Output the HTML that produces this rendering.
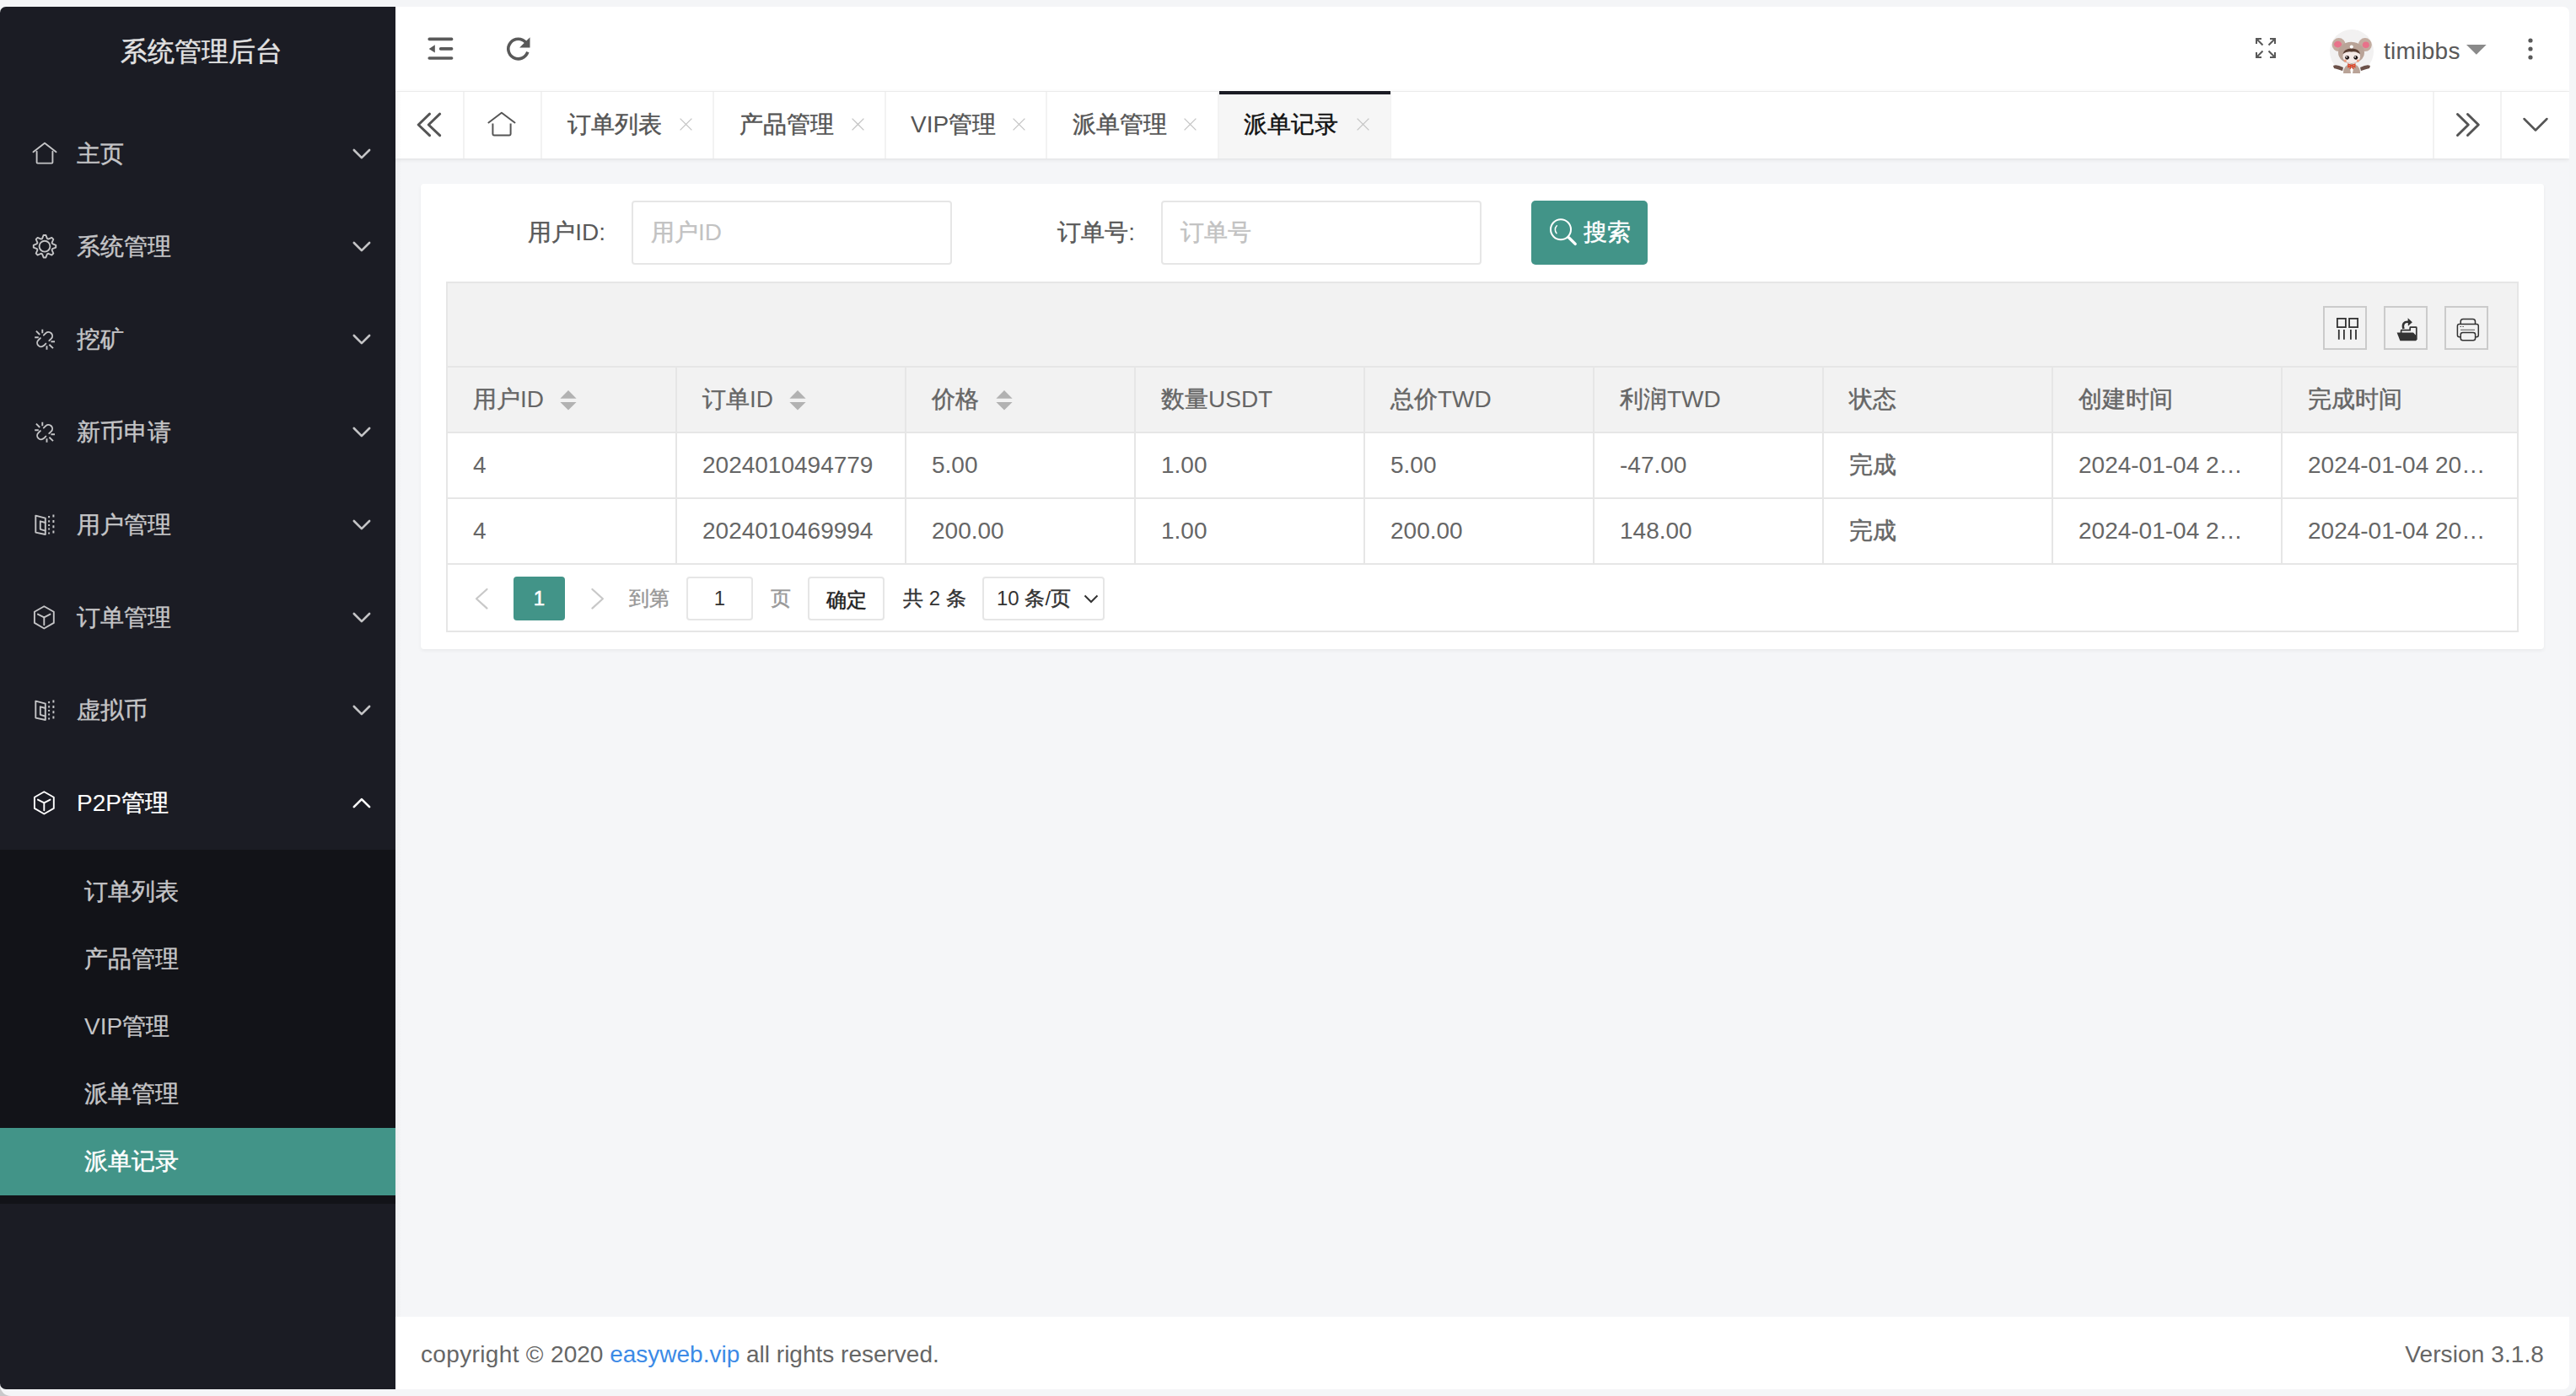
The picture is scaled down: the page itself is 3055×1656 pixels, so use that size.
<!DOCTYPE html><html><head><meta charset="utf-8"><title>派单记录</title><style>
*{margin:0;padding:0;box-sizing:border-box}
html,body{width:3055px;height:1656px;overflow:hidden;background:#c9c9cb;font-family:"Liberation Sans",sans-serif}
div,span{position:absolute;white-space:nowrap}
span.i{position:static}
span.c{position:static;-webkit-text-stroke:0.45px currentColor}
svg{position:absolute;overflow:visible}
#win{left:0;top:0;width:3047px;height:1648px;clip-path:inset(8px 0 0 0 round 7px);background:#f5f6f8}
.mt{font-size:28px;color:#c4c4c6;line-height:110px;height:110px}
.st{font-size:28px;color:#c4c4c6;line-height:80px;height:80px}
.tt{font-size:28px;color:#595959;line-height:80px;height:80px;top:108px}
.th{font-size:28px;color:#666;line-height:76px;height:76px;top:436px}
.td{font-size:28px;color:#666;line-height:76px;height:76px}
.vl{background:#e6e6e6;width:2px}
.hl{background:#e6e6e6;height:2px}
.pg{font-size:24px;line-height:52px;height:52px;top:684px}
</style></head><body>
<div style="left:0;top:0;width:3055px;height:1656px;background:#f4f5f7;border-radius:0 0 13px 13px"></div>
<div id="win">
<div style="left:0;top:0;width:469px;height:1648px;background:#1b1c24"></div>
<div style="left:4px;top:39px;width:469px;text-align:center;font-size:32px;line-height:44px;color:#e2e2e2"><span class="c">系统管理后台</span></div>
<div class="mt" style="left:91px;top:127.6px;color:#c4c4c6"><span class="c">主页</span></div>
<svg style="left:0;top:0" width="1" height="1"><path d="M419.8 178.0 L428.9 187.1 L438.1 178.0" fill="none" stroke="#c4c4c6" stroke-width="2.6" stroke-linecap="round" stroke-linejoin="round"/></svg>
<svg style="left:39px;top:168.6px" width="28" height="28" viewBox="0 0 28 28"><path d="M0.5 11.3 L14 0.8 L27.5 11.3" fill="none" stroke="#c4c4c6" stroke-width="1.9" stroke-linecap="round" stroke-linejoin="round"/><path d="M4.6 10.8 V23.6 Q4.6 24.6 5.6 24.6 H22.4 Q23.4 24.6 23.4 23.6 V10.8" fill="none" stroke="#c4c4c6" stroke-width="1.9" stroke-linecap="round" stroke-linejoin="round"/></svg>
<div class="mt" style="left:91px;top:237.6px;color:#c4c4c6"><span class="c">系统管理</span></div>
<svg style="left:0;top:0" width="1" height="1"><path d="M419.8 288.0 L428.9 297.1 L438.1 288.0" fill="none" stroke="#c4c4c6" stroke-width="2.6" stroke-linecap="round" stroke-linejoin="round"/></svg>
<svg style="left:39px;top:278.6px" width="28" height="28" viewBox="0 0 28 28"><path d="M12.64 -0.03 L15.36 -0.03 L16.97 4.07 L18.36 4.65 L22.40 2.89 L24.31 4.80 L22.55 8.84 L23.13 10.23 L27.23 11.84 L27.23 14.56 L23.13 16.17 L22.55 17.56 L24.31 21.60 L22.40 23.51 L18.36 21.75 L16.97 22.33 L15.36 26.43 L12.64 26.43 L11.03 22.33 L9.64 21.75 L5.60 23.51 L3.69 21.60 L5.45 17.56 L4.87 16.17 L0.77 14.56 L0.77 11.84 L4.87 10.23 L5.45 8.84 L3.69 4.80 L5.60 2.89 L9.64 4.65 L11.03 4.07Z" fill="none" stroke="#c4c4c6" stroke-width="1.9" stroke-linecap="round" stroke-linejoin="round"/><circle cx="14" cy="13.2" r="6.4" fill="none" stroke="#c4c4c6" stroke-width="1.9" stroke-linecap="round" stroke-linejoin="round"/></svg>
<div class="mt" style="left:91px;top:347.6px;color:#c4c4c6"><span class="c">挖矿</span></div>
<svg style="left:0;top:0" width="1" height="1"><path d="M419.8 398.0 L428.9 407.1 L438.1 398.0" fill="none" stroke="#c4c4c6" stroke-width="2.6" stroke-linecap="round" stroke-linejoin="round"/></svg>
<svg style="left:39px;top:389.20000000000005px" width="28" height="28" viewBox="0 0 28 28"><path d="M12.8 8.6 L15.35 6.15 A4.6 4.6 0 0 1 21.85 12.65 L19.3 15.2" fill="none" stroke="#c4c4c6" stroke-width="1.9" stroke-linecap="round" stroke-linejoin="round"/><path d="M8.85 12.05 L6.35 14.55 A4.6 4.6 0 0 0 12.85 21.05 L15.35 18.55" fill="none" stroke="#c4c4c6" stroke-width="1.9" stroke-linecap="round" stroke-linejoin="round"/><path d="M3.9 3.7 L8.2 8 M11.3 1.7 V6.3 M2.2 11.2 H6.8 M21.4 16.3 H26 M16.5 21.2 V25.8 M19.4 19.8 L24 24.1" fill="none" stroke="#c4c4c6" stroke-width="1.9"/></svg>
<div class="mt" style="left:91px;top:457.6px;color:#c4c4c6"><span class="c">新币申请</span></div>
<svg style="left:0;top:0" width="1" height="1"><path d="M419.8 508.0 L428.9 517.1 L438.1 508.0" fill="none" stroke="#c4c4c6" stroke-width="2.6" stroke-linecap="round" stroke-linejoin="round"/></svg>
<svg style="left:39px;top:499.20000000000005px" width="28" height="28" viewBox="0 0 28 28"><path d="M12.8 8.6 L15.35 6.15 A4.6 4.6 0 0 1 21.85 12.65 L19.3 15.2" fill="none" stroke="#c4c4c6" stroke-width="1.9" stroke-linecap="round" stroke-linejoin="round"/><path d="M8.85 12.05 L6.35 14.55 A4.6 4.6 0 0 0 12.85 21.05 L15.35 18.55" fill="none" stroke="#c4c4c6" stroke-width="1.9" stroke-linecap="round" stroke-linejoin="round"/><path d="M3.9 3.7 L8.2 8 M11.3 1.7 V6.3 M2.2 11.2 H6.8 M21.4 16.3 H26 M16.5 21.2 V25.8 M19.4 19.8 L24 24.1" fill="none" stroke="#c4c4c6" stroke-width="1.9"/></svg>
<div class="mt" style="left:91px;top:567.6px;color:#c4c4c6"><span class="c">用户管理</span></div>
<svg style="left:0;top:0" width="1" height="1"><path d="M419.8 618.0 L428.9 627.1 L438.1 618.0" fill="none" stroke="#c4c4c6" stroke-width="2.6" stroke-linecap="round" stroke-linejoin="round"/></svg>
<svg style="left:39px;top:608.6px" width="28" height="28" viewBox="0 0 28 28"><path d="M3.3 2.6 L14.8 5.6 V25 L3.3 22.6 Z" fill="none" stroke="#c4c4c6" stroke-width="1.9" stroke-linecap="round" stroke-linejoin="round"/><path d="M14.8 11 L8.8 9.3 V18.8 L14.8 20.6" fill="none" stroke="#c4c4c6" stroke-width="1.9" stroke-linecap="round" stroke-linejoin="round"/><path d="M19.1 3 V5.2 M19.1 8.3 V10.5 M19.1 12.9 V15.1 M19.1 17.4 V19.6 M19.1 22.4 V24.6 M24.4 1.6 V4.6 M24.4 8 V11 M24.4 14.3 V17.3 M24.4 20.6 V23.6" fill="none" stroke="#c4c4c6" stroke-width="2"/></svg>
<div class="mt" style="left:91px;top:677.6px;color:#c4c4c6"><span class="c">订单管理</span></div>
<svg style="left:0;top:0" width="1" height="1"><path d="M419.8 728.0 L428.9 737.1 L438.1 728.0" fill="none" stroke="#c4c4c6" stroke-width="2.6" stroke-linecap="round" stroke-linejoin="round"/></svg>
<svg style="left:39px;top:717.7px" width="28" height="28" viewBox="0 0 28 28"><path d="M13.3 1.2 L24.8 7.8 V20.9 L13.3 27.5 L1.9 20.9 V7.8 Z" fill="none" stroke="#c4c4c6" stroke-width="1.9" stroke-linecap="round" stroke-linejoin="round"/><path d="M5.9 10.6 L13.3 14.3 L20.5 10.6 M13.3 14.3 V23.2" fill="none" stroke="#c4c4c6" stroke-width="1.9" stroke-linecap="round" stroke-linejoin="round"/></svg>
<div class="mt" style="left:91px;top:787.6px;color:#c4c4c6"><span class="c">虚拟币</span></div>
<svg style="left:0;top:0" width="1" height="1"><path d="M419.8 838.0 L428.9 847.1 L438.1 838.0" fill="none" stroke="#c4c4c6" stroke-width="2.6" stroke-linecap="round" stroke-linejoin="round"/></svg>
<svg style="left:39px;top:828.6px" width="28" height="28" viewBox="0 0 28 28"><path d="M3.3 2.6 L14.8 5.6 V25 L3.3 22.6 Z" fill="none" stroke="#c4c4c6" stroke-width="1.9" stroke-linecap="round" stroke-linejoin="round"/><path d="M14.8 11 L8.8 9.3 V18.8 L14.8 20.6" fill="none" stroke="#c4c4c6" stroke-width="1.9" stroke-linecap="round" stroke-linejoin="round"/><path d="M19.1 3 V5.2 M19.1 8.3 V10.5 M19.1 12.9 V15.1 M19.1 17.4 V19.6 M19.1 22.4 V24.6 M24.4 1.6 V4.6 M24.4 8 V11 M24.4 14.3 V17.3 M24.4 20.6 V23.6" fill="none" stroke="#c4c4c6" stroke-width="2"/></svg>
<div class="mt" style="left:91px;top:897.6px;color:#fff">P2P<span class="c">管理</span></div>
<svg style="left:0;top:0" width="1" height="1"><path d="M419.8 957.2 L428.9 948.1 L438.1 957.2" fill="none" stroke="#fff" stroke-width="2.6" stroke-linecap="round" stroke-linejoin="round"/></svg>
<svg style="left:39px;top:937.7px" width="28" height="28" viewBox="0 0 28 28"><path d="M13.3 1.2 L24.8 7.8 V20.9 L13.3 27.5 L1.9 20.9 V7.8 Z" fill="none" stroke="#fff" stroke-width="1.9" stroke-linecap="round" stroke-linejoin="round"/><path d="M5.9 10.6 L13.3 14.3 L20.5 10.6 M13.3 14.3 V23.2" fill="none" stroke="#fff" stroke-width="1.9" stroke-linecap="round" stroke-linejoin="round"/></svg>
<div style="left:0;top:1008px;width:469px;height:420px;background:#121318"></div>
<div class="st" style="left:100px;top:1018px"><span class="c">订单列表</span></div>
<div class="st" style="left:100px;top:1098px"><span class="c">产品管理</span></div>
<div class="st" style="left:100px;top:1178px">VIP<span class="c">管理</span></div>
<div class="st" style="left:100px;top:1258px"><span class="c">派单管理</span></div>
<div style="left:0;top:1338px;width:469px;height:80px;background:#429488"></div>
<div class="st" style="left:100px;top:1338px;color:#fff"><span class="c">派单记录</span></div>
<div style="left:469px;top:8px;width:2578px;height:100px;background:#fff"></div>
<div style="left:469px;top:107.5px;width:2578px;height:2px;background:#f2f2f2"></div>
<svg style="left:0;top:0" width="1" height="1"><path d="M509.2 46.4 H535.6 M522.6 57.9 H535.6 M509.2 69 H535.6" fill="none" stroke="#595959" stroke-width="3.6" stroke-linecap="round"/><path d="M508.7 57.9 L515.8 53.3 V62.6 Z" fill="#595959"/></svg>
<svg style="left:0;top:0" width="1" height="1"><path d="M623.64 50.42 A11.8 11.8 0 1 0 625.82 61.65" fill="none" stroke="#595959" stroke-width="3.6"/><path d="M616.1 56.4 H628.5 V44.2 Z" fill="#595959"/></svg>
<svg style="left:2675px;top:45px" width="24" height="24" viewBox="0 0 24 24"><path d="M1 7 V1 H7 M1 1 L8.5 8.5" fill="none" stroke="#595959" stroke-width="2"/><path d="M23 7 V1 H17 M23 1 L15.5 8.5" fill="none" stroke="#595959" stroke-width="2"/><path d="M1 17 V23 H7 M1 23 L8.5 15.5" fill="none" stroke="#595959" stroke-width="2"/><path d="M23 17 V23 H17 M23 23 L15.5 15.5" fill="none" stroke="#595959" stroke-width="2"/></svg>
<svg style="left:2763px;top:35px" width="52" height="52" viewBox="0 0 52 52"><circle cx="26" cy="26" r="26" fill="#f2f1f1"/><path d="M4 43 Q8 41 16 45 L15 49 Q9 47 5 46Z" fill="#6b5048"/><path d="M48 43 Q44 41 36 45 L37 49 Q43 47 47 46Z" fill="#6b5048"/><path d="M16 52 Q16 42 26 40 Q36 42 36 52Z" fill="#b9a397"/><path d="M24 46 L28 46 L27 52 L25 52Z" fill="#fff"/><circle cx="10.7" cy="18.1" r="8" fill="#c3ab9f"/><circle cx="41.8" cy="18.1" r="8" fill="#c3ab9f"/><ellipse cx="9.6" cy="17.6" rx="4.6" ry="3.8" fill="#e8728a"/><ellipse cx="42.8" cy="18.3" rx="4" ry="3.8" fill="#e8728a"/><ellipse cx="25.5" cy="27.5" rx="15.5" ry="12.8" fill="#b9a397"/><ellipse cx="25.8" cy="32" rx="10.4" ry="8" fill="#f4e9e6"/><path d="M15.5 29 Q17 22.5 25.8 22.5 Q34.5 22.5 36 29 Q31 25.5 25.8 26.5 Q20 25.5 15.5 29Z" fill="#5a3f34"/><circle cx="20.6" cy="33.3" r="2.4" fill="#1a1010"/><circle cx="30.8" cy="33.3" r="2.4" fill="#1a1010"/><circle cx="20" cy="32.6" r="0.9" fill="#fff"/><circle cx="30.2" cy="32.6" r="0.9" fill="#fff"/><circle cx="18.3" cy="37" r="1.6" fill="#ef9a7a"/><circle cx="33.5" cy="37" r="1.6" fill="#ef9a7a"/><circle cx="25.8" cy="20.5" r="2" fill="#fff"/><path d="M22 41 L25.9 42.6 L22 44.6Z M29.8 41 L25.9 42.6 L29.8 44.6Z M25.2 42.6 L24 47 M26.6 42.6 L27.8 47" fill="none" stroke="#e0462a" stroke-width="1.3"/></svg>
<div style="left:2827px;top:8px;font-size:28px;line-height:100px;color:#595959;top:11px;letter-spacing:0.3px">timibbs</div>
<svg style="left:0;top:0" width="1" height="1"><path d="M2925 53.1 H2948.7 L2936.85 64.8 Z" fill="#8a8a8a"/></svg>
<svg style="left:0;top:0" width="1" height="1"><circle cx="3001" cy="48" r="2.6" fill="#595959"/><circle cx="3001" cy="58" r="2.6" fill="#595959"/><circle cx="3001" cy="68" r="2.6" fill="#595959"/></svg>
<div style="left:469px;top:109px;width:2578px;height:79px;background:#fff;box-shadow:0 1px 5px rgba(0,0,0,.1)"></div>
<div style="left:549px;top:109px;width:2px;height:79px;background:#f2f2f2"></div>
<div style="left:641px;top:109px;width:2px;height:79px;background:#f2f2f2"></div>
<div style="left:845px;top:109px;width:2px;height:79px;background:#f2f2f2"></div>
<div style="left:1049px;top:109px;width:2px;height:79px;background:#f2f2f2"></div>
<div style="left:1240px;top:109px;width:2px;height:79px;background:#f2f2f2"></div>
<div style="left:1444px;top:109px;width:2px;height:79px;background:#f2f2f2"></div>
<div style="left:1648px;top:109px;width:2px;height:79px;background:#f2f2f2"></div>
<div style="left:2885px;top:109px;width:2px;height:79px;background:#f2f2f2"></div>
<div style="left:2965px;top:109px;width:2px;height:79px;background:#f2f2f2"></div>
<svg style="left:0;top:0" width="1" height="1"><path d="M509.5 135.2 L496.2 148 L509.5 160.7 M521.6 135.2 L508.3 148 L521.6 160.7" fill="none" stroke="#555" stroke-width="3" stroke-linecap="round" stroke-linejoin="round"/></svg>
<svg style="left:0;top:0" width="1" height="1"><path d="M579.4 145.5 L594.9 133.7 L610.5 145.5" fill="none" stroke="#555" stroke-width="2" stroke-linecap="round" stroke-linejoin="round"/><path d="M584.4 146.4 V159 Q584.4 160.4 585.8 160.4 H604.2 Q605.6 160.4 605.6 159 V146.4" fill="none" stroke="#555" stroke-width="2"/></svg>
<div style="left:1446px;top:108px;width:203px;height:80px;background:#f6f6f6"></div>
<div style="left:1446px;top:108px;width:203px;height:4px;background:#1b1c24"></div>
<div class="tt" style="left:672.75px;color:#555"><span class="c">订单列表</span></div>
<svg style="left:805.5px;top:140px" width="15" height="15" viewBox="0 0 15 15"><path d="M0.6 0.6 L14.4 14.4 M14.4 0.6 L0.6 14.4" stroke="#c4c4c4" stroke-width="1.3"/></svg>
<div class="tt" style="left:877px;color:#555"><span class="c">产品管理</span></div>
<svg style="left:1009.75px;top:140px" width="15" height="15" viewBox="0 0 15 15"><path d="M0.6 0.6 L14.4 14.4 M14.4 0.6 L0.6 14.4" stroke="#c4c4c4" stroke-width="1.3"/></svg>
<div class="tt" style="left:1080px;color:#555">VIP<span class="c">管理</span></div>
<svg style="left:1200.5px;top:140px" width="15" height="15" viewBox="0 0 15 15"><path d="M0.6 0.6 L14.4 14.4 M14.4 0.6 L0.6 14.4" stroke="#c4c4c4" stroke-width="1.3"/></svg>
<div class="tt" style="left:1271.5px;color:#555"><span class="c">派单管理</span></div>
<svg style="left:1404.25px;top:140px" width="15" height="15" viewBox="0 0 15 15"><path d="M0.6 0.6 L14.4 14.4 M14.4 0.6 L0.6 14.4" stroke="#c4c4c4" stroke-width="1.3"/></svg>
<div class="tt" style="left:1475px;color:#111"><span class="c">派单记录</span></div>
<svg style="left:1608.5px;top:140px" width="15" height="15" viewBox="0 0 15 15"><path d="M0.6 0.6 L14.4 14.4 M14.4 0.6 L0.6 14.4" stroke="#c4c4c4" stroke-width="1.3"/></svg>
<svg style="left:0;top:0" width="1" height="1"><path d="M2914.5 135.5 L2927.3 148 L2914.5 160.5 M2926.5 135.5 L2939.3 148 L2926.5 160.5" fill="none" stroke="#555" stroke-width="3" stroke-linecap="round" stroke-linejoin="round"/></svg>
<svg style="left:0;top:0" width="1" height="1"><path d="M2993.5 141 L3007 154.5 L3020.5 141" fill="none" stroke="#555" stroke-width="2.5" stroke-linecap="round" stroke-linejoin="round"/></svg>
<div style="left:499px;top:218px;width:2518px;height:552px;background:#fff;border-radius:4px;box-shadow:0 2px 4px rgba(0,0,0,.05)"></div>
<div style="left:560px;top:238px;width:158px;text-align:right;font-size:28px;line-height:76px;color:#595959"><span class="c">用户</span>ID:</div>
<div style="left:749px;top:238px;width:380px;height:76px;border:2px solid #e6e6e6;border-radius:4px;background:#fff"></div>
<div style="left:772px;top:238px;font-size:28px;line-height:76px;color:#c2c2c2"><span class="c">用户</span>ID</div>
<div style="left:1188px;top:238px;width:158px;text-align:right;font-size:28px;line-height:76px;color:#595959"><span class="c">订单号</span>:</div>
<div style="left:1377px;top:238px;width:380px;height:76px;border:2px solid #e6e6e6;border-radius:4px;background:#fff"></div>
<div style="left:1400px;top:238px;font-size:28px;line-height:76px;color:#c2c2c2"><span class="c">订单号</span></div>
<div style="left:1816px;top:238px;width:138px;height:76px;border-radius:5px;background:#429488"></div>
<svg style="left:1838px;top:258.5px" width="32" height="33" viewBox="0 0 32 33"><circle cx="13" cy="13.25" r="12" fill="none" stroke="#fff" stroke-width="2"/><path d="M8.3 8.8 A6.5 6.5 0 0 0 8 17.8" fill="none" stroke="#fff" stroke-width="1.5" stroke-linecap="round"/><path d="M22.4 22.8 L30.2 30.4" stroke="#fff" stroke-width="3.4" stroke-linecap="round"/></svg>
<div style="left:1878px;top:238px;font-size:28px;line-height:76px;color:#fff"><span class="c">搜索</span></div>
<div style="left:529px;top:334px;width:2458px;height:416px;border:2px solid #e6e6e6;background:#fff"></div>
<div style="left:531px;top:336px;width:2454px;height:176px;background:#f2f2f2"></div>
<div class="hl" style="left:529px;top:434px;width:2458px"></div>
<div class="hl" style="left:529px;top:512px;width:2458px"></div>
<div class="hl" style="left:529px;top:590px;width:2458px"></div>
<div class="hl" style="left:529px;top:668px;width:2458px"></div>
<div class="vl" style="left:801px;top:434px;height:236px"></div>
<div class="vl" style="left:1073px;top:434px;height:236px"></div>
<div class="vl" style="left:1345px;top:434px;height:236px"></div>
<div class="vl" style="left:1617px;top:434px;height:236px"></div>
<div class="vl" style="left:1889px;top:434px;height:236px"></div>
<div class="vl" style="left:2161px;top:434px;height:236px"></div>
<div class="vl" style="left:2433px;top:434px;height:236px"></div>
<div class="vl" style="left:2705px;top:434px;height:236px"></div>
<div style="left:2755px;top:363px;width:52px;height:52px;border:2px solid #cbcbcb"></div>
<div style="left:2827px;top:363px;width:52px;height:52px;border:2px solid #cbcbcb"></div>
<div style="left:2899px;top:363px;width:52px;height:52px;border:2px solid #cbcbcb"></div>
<svg style="left:0;top:0" width="1" height="1"><rect x="2771.9" y="377.9" width="10" height="10.2" fill="none" stroke="#333" stroke-width="1.8"/><rect x="2786.1" y="377.9" width="10" height="10.2" fill="none" stroke="#333" stroke-width="1.8"/><path d="M2773.8 391 V402.8 M2779.9 391 V402.8 M2787.9 391 V402.8 M2794 391 V402.8" stroke="#333" stroke-width="1.8"/></svg>
<svg style="left:0;top:0" width="1" height="1"><path d="M2842.6 394.5 H2862 L2865.9 398.5 V403.2 Q2865.9 404.2 2864.9 404.2 H2846.4 Z" fill="#333"/><path d="M2847.6 395 V392.2 Q2847.6 391.6 2848.2 391.6 H2858.2 V388.8 Q2858.2 388.2 2858.8 388.2 H2865.2 Q2865.8 388.2 2865.8 388.8 V403" fill="none" stroke="#333" stroke-width="1.7"/><path d="M2850.5 390 Q2848 381.5 2856.3 381.8" fill="none" stroke="#333" stroke-width="2.6"/><path d="M2855.6 377.3 L2860.9 382.3 L2855.9 386.7 Z" fill="#333"/></svg>
<svg style="left:0;top:0" width="1" height="1"><path d="M2918.2 384.6 V381.5 Q2918.2 378.6 2921.1 378.6 H2932.6 Q2935.5 378.6 2935.5 381.5 V384.6" fill="none" stroke="#333" stroke-width="1.5"/><path d="M2918 399.8 H2916.6 Q2914.4 399.8 2914.4 397.6 V386.8 Q2914.4 384.6 2916.6 384.6 H2937.1 Q2939.3 384.6 2939.3 386.8 V397.6 Q2939.3 399.8 2937.1 399.8 H2935.6" fill="none" stroke="#333" stroke-width="1.5"/><rect x="2918.2" y="394.5" width="17.4" height="9.2" rx="2.5" fill="none" stroke="#333" stroke-width="1.5"/><path d="M2918 391.3 H2935" stroke="#333" stroke-width="0.8"/><path d="M2917.6 387.5 H2919 M2920.4 387.5 H2921.8" stroke="#333" stroke-width="0.9"/></svg>
<div class="th" style="left:561px"><span class="c">用户</span>ID</div>
<div class="th" style="left:833px"><span class="c">订单</span>ID</div>
<div class="th" style="left:1105px"><span class="c">价格</span></div>
<div class="th" style="left:1377px"><span class="c">数量</span>USDT</div>
<div class="th" style="left:1649px"><span class="c">总价</span>TWD</div>
<div class="th" style="left:1921px"><span class="c">利润</span>TWD</div>
<div class="th" style="left:2193px"><span class="c">状态</span></div>
<div class="th" style="left:2465px"><span class="c">创建时间</span></div>
<div class="th" style="left:2737px"><span class="c">完成时间</span></div>
<svg style="left:663.75px;top:463px" width="20" height="24" viewBox="0 0 20 24"><path d="M10 0 L19.6 9.8 H0.4 Z M0.4 14.1 H19.6 L10 23.5 Z" fill="#b2b2b2"/></svg>
<svg style="left:936px;top:463px" width="20" height="24" viewBox="0 0 20 24"><path d="M10 0 L19.6 9.8 H0.4 Z M0.4 14.1 H19.6 L10 23.5 Z" fill="#b2b2b2"/></svg>
<svg style="left:1181px;top:463px" width="20" height="24" viewBox="0 0 20 24"><path d="M10 0 L19.6 9.8 H0.4 Z M0.4 14.1 H19.6 L10 23.5 Z" fill="#b2b2b2"/></svg>
<div class="td" style="left:561px;top:514px">4</div>
<div class="td" style="left:833px;top:514px">2024010494779</div>
<div class="td" style="left:1105px;top:514px">5.00</div>
<div class="td" style="left:1377px;top:514px">1.00</div>
<div class="td" style="left:1649px;top:514px">5.00</div>
<div class="td" style="left:1921px;top:514px">-47.00</div>
<div class="td" style="left:2193px;top:514px"><span class="c">完成</span></div>
<div class="td" style="left:2465px;top:514px">2024-01-04 2…</div>
<div class="td" style="left:2737px;top:514px">2024-01-04 20…</div>
<div class="td" style="left:561px;top:592px">4</div>
<div class="td" style="left:833px;top:592px">2024010469994</div>
<div class="td" style="left:1105px;top:592px">200.00</div>
<div class="td" style="left:1377px;top:592px">1.00</div>
<div class="td" style="left:1649px;top:592px">200.00</div>
<div class="td" style="left:1921px;top:592px">148.00</div>
<div class="td" style="left:2193px;top:592px"><span class="c">完成</span></div>
<div class="td" style="left:2465px;top:592px">2024-01-04 2…</div>
<div class="td" style="left:2737px;top:592px">2024-01-04 20…</div>
<svg style="left:0;top:0" width="1" height="1"><path d="M577.5 699 L565 710.3 L577.5 721.6 M702.4 699 L714.9 710.3 L702.4 721.6" fill="none" stroke="#c8c8c8" stroke-width="2.2" stroke-linecap="round" stroke-linejoin="round"/></svg>
<div style="left:609px;top:684px;width:61px;height:52px;background:#429488;border-radius:4px"></div>
<div class="pg" style="left:609px;width:61px;text-align:center;color:#fff;-webkit-text-stroke:0.6px #fff">1</div>
<div class="pg" style="left:746px;color:#999"><span class="c">到第</span></div>
<div style="left:814px;top:684px;width:79px;height:52px;border:2px solid #e6e6e6;border-radius:4px"></div>
<div class="pg" style="left:814px;width:79px;text-align:center;color:#333">1</div>
<div class="pg" style="left:914px;color:#999"><span class="c">页</span></div>
<div style="left:958px;top:684px;width:91px;height:52px;border:2px solid #e6e6e6;border-radius:4px"></div>
<div class="pg" style="left:958px;width:91px;text-align:center;color:#222;top:686px"><span class="c">确定</span></div>
<div class="pg" style="left:1071px;color:#333"><span class="c">共</span> 2 <span class="c">条</span></div>
<div style="left:1165px;top:684px;width:145px;height:52px;border:2px solid #e6e6e6;border-radius:4px"></div>
<div class="pg" style="left:1182px;color:#333">10 <span class="c">条</span>/<span class="c">页</span></div>
<svg style="left:0;top:0" width="1" height="1"><path d="M1286.5 706.5 L1294 714 L1301.5 706.5" fill="none" stroke="#333" stroke-width="2"/></svg>
<div style="left:469px;top:109px;width:7px;height:1453px;background:linear-gradient(to right,rgba(0,0,0,.035),rgba(0,0,0,0))"></div>
<div style="left:469px;top:1562px;width:2578px;height:86px;background:#fff"></div>
<div style="left:499px;top:1564px;font-size:28px;line-height:86px;color:#666"><span class="i" style="letter-spacing:0.36px">copyright</span> <span class="i" style="letter-spacing:1px">©</span> 2020 <span class="i" style="color:#3c8ae6">easyweb.vip</span> all rights reserved.</div>
<div style="left:2600px;top:1562px;width:2417px;font-size:28px;line-height:86px;color:#666;text-align:right;left:600px;top:1564px;letter-spacing:0.1px">Version 3.1.8</div>
</div></body></html>
